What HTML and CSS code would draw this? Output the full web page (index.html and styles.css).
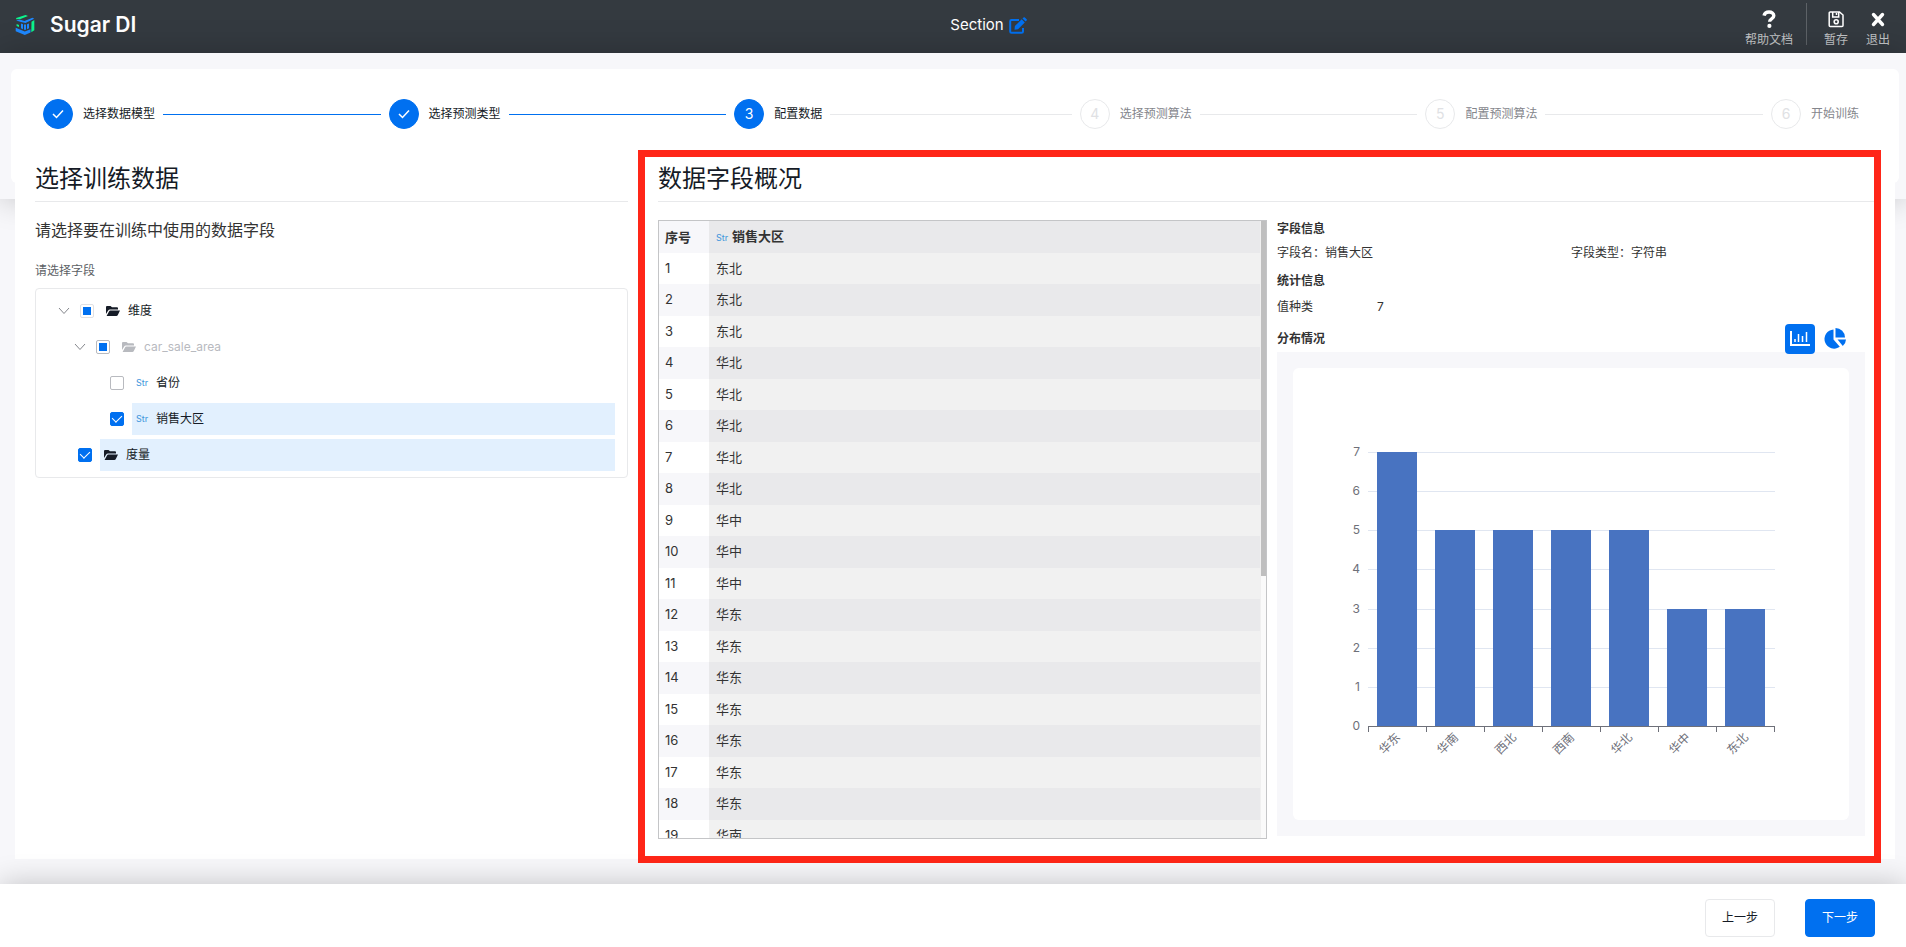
FILE: index.html
```
<!DOCTYPE html>
<html lang="zh-CN">
<head>
<meta charset="utf-8">
<title>Sugar DI</title>
<link rel="stylesheet" href="styles.css">
</head>
<body>
<header class="topbar">
  <div class="brand">
    <svg class="brand-logo" viewBox="0 0 20 20" aria-hidden="true">
      <path d="M1.200 4.200V3L10.500 0l2.500 1L5.500 4z" fill="#0cf58c"/>
      <path d="M16.500 6.800 19.300 5v10.300L16.300 17.200z" fill="#0cf58c"/>
      <path d="M1.600 9 4 10v2L1.600 11z" fill="#0cf58c"/>
      <path d="M1.200 5.500 4.500 4.500 9.500 6 17.500 2.800 19.200 3.800 10.500 8 6 7z" fill="#1e88ff"/>
      <path d="M6 8.500l2 .8v5L6 13.300zM9 9.500h2v5.300H9zM12 9.300l2-.8v4.800l-2 1z" fill="#1e88ff"/>
      <path d="M.7 12.700 9.800 16.600 15.500 14.200v3.200L9.800 20 .7 16.300z" fill="#1e88ff"/>
    </svg>
    <span class="brand-name">Sugar DI</span>
  </div>
  <div class="doc-title">
    <span>Section</span>
    <button class="icon-button" type="button" aria-label="编辑名称">
      <svg class="edit-icon" viewBox="0 0 18 17" aria-hidden="true">
        <path d="M10 3H2.500A1.300 1.300 0 0 0 1.200 4.300v10.200a1.300 1.300 0 0 0 1.300 1.300h10.200a1.300 1.300 0 0 0 1.300-1.300V11" fill="none" stroke="#0070f0" stroke-width="2"/>
        <path d="M5.500 12.700l.4-3.600 6.800-6.800 3.100 3.100L9 12.200zM13.500 1.500 14.500.5a1 1 0 0 1 1.400 0l1.700 1.700a1 1 0 0 1 0 1.400l-1 1z" fill="#0070f0"/>
      </svg>
    </button>
  </div>
  <nav class="tools">
    <button class="tool" type="button">
      <svg class="tool-icon" viewBox="0 0 18 18" aria-hidden="true"><path d="M4 5.600C4.600 3.300 6.500 2 9 2c2.800 0 4.800 1.500 4.800 3.700 0 3.300-4.200 3.100-4.200 6" fill="none" stroke="#fff" stroke-width="3.400"/><circle cx="9.400" cy="15.900" r="2.100" fill="#fff"/></svg>
      <span>帮助文档</span>
    </button>
    <span class="divider"></span>
    <button class="tool" type="button">
      <svg class="tool-icon" viewBox="0 0 18 18" aria-hidden="true"><path d="M3.200 2h9.300L16 5v10.500a1 1 0 0 1-1 1H3.200a1 1 0 0 1-1-1V3a1 1 0 0 1 1-1zM5.700 2v5h6V2M9.500 3v2" fill="none" stroke="#fff" stroke-width="1.500"/><circle cx="9.200" cy="11.800" r="2" fill="none" stroke="#fff" stroke-width="1.600"/></svg>
      <span>暂存</span>
    </button>
    <button class="tool" type="button">
      <svg class="tool-icon" viewBox="0 0 18 18" aria-hidden="true"><path d="M4.500 4.500l9 10m0-10-9 10" fill="none" stroke="#fff" stroke-width="3.400" stroke-linecap="round"/></svg>
      <span>退出</span>
    </button>
  </nav>
</header>

<main class="main">
  <section class="steps-bar">
    <ol class="steps">
      <li class="step done"><span class="dot"><svg viewBox="0 0 12 10" aria-hidden="true"><path d="M1 5l3.500 3.500L11 1.500"/></svg></span><span>选择数据模型</span></li>
      <li class="step done"><span class="dot"><svg viewBox="0 0 12 10" aria-hidden="true"><path d="M1 5l3.500 3.500L11 1.500"/></svg></span><span>选择预测类型</span></li>
      <li class="step active"><span class="dot">3</span><span>配置数据</span></li>
      <li class="step"><span class="dot">4</span><span>选择预测算法</span></li>
      <li class="step"><span class="dot">5</span><span>配置预测算法</span></li>
      <li class="step"><span class="dot">6</span><span>开始训练</span></li>
    </ol>
  </section>

  <div class="panel">
    <section class="fields">
      <h2 class="title">选择训练数据</h2>
      <p class="subtitle">请选择要在训练中使用的数据字段</p>
      <p class="hint">请选择字段</p>
      <div class="tree">
        <div class="node level-1">
          <svg class="chevron" viewBox="0 0 12 12" aria-hidden="true"><path d="M1 3l5 5.500L11 3"/></svg>
          <input class="check partial light" type="checkbox" id="f1">
          <label class="node-label" for="f1"><svg class="folder" viewBox="0 0 14 10" aria-hidden="true"><path d="M0 8V1a1 1 0 0 1 1-1h3.500L6 1.300h5a1 1 0 0 1 1 1V3.500H4a2 2 0 0 0-1.800 1zM.6 10l2.400-4.600a1.500 1.500 0 0 1 1.300-.8H14L11.700 9.200a1.500 1.500 0 0 1-1.300.8z"/></svg>维度</label>
        </div>
        <div class="node level-2 muted">
          <svg class="chevron" viewBox="0 0 12 12" aria-hidden="true"><path d="M1 3l5 5.500L11 3"/></svg>
          <input class="check partial" type="checkbox" id="f2">
          <label class="node-label" for="f2"><svg class="folder" viewBox="0 0 14 10" aria-hidden="true"><path d="M0 8V1a1 1 0 0 1 1-1h3.500L6 1.300h5a1 1 0 0 1 1 1V3.500H4a2 2 0 0 0-1.800 1zM.6 10l2.400-4.600a1.500 1.500 0 0 1 1.300-.8H14L11.700 9.200a1.500 1.500 0 0 1-1.300.8z"/></svg>car_sale_area</label>
        </div>
        <div class="node level-3">
          <input class="check" type="checkbox" id="f3">
          <label class="node-label leaf" for="f3"><span class="type">Str</span>省份</label>
        </div>
        <div class="node level-3">
          <input class="check" type="checkbox" id="f4" checked>
          <label class="node-label leaf selected" for="f4"><span class="type">Str</span>销售大区</label>
        </div>
        <div class="node level-2b">
          <input class="check" type="checkbox" id="f5" checked>
          <label class="node-label leaf selected" for="f5"><svg class="folder" viewBox="0 0 14 10" aria-hidden="true"><path d="M0 8V1a1 1 0 0 1 1-1h3.500L6 1.300h5a1 1 0 0 1 1 1V3.500H4a2 2 0 0 0-1.800 1zM.6 10l2.400-4.600a1.500 1.500 0 0 1 1.300-.8H14L11.700 9.200a1.500 1.500 0 0 1-1.300.8z"/></svg>度量</label>
        </div>
      </div>
    </section>

    <section class="overview">
      <h2 class="title">数据字段概况</h2>
      <div class="overview-body">
        <div class="grid-box">
          <div class="grid-view">
            <table class="grid">
              <thead><tr><th class="index">序号</th><th><span class="type">Str</span>销售大区</th></tr></thead>
              <tbody>
                <tr><td>1</td><td>东北</td></tr>
                <tr><td>2</td><td>东北</td></tr>
                <tr><td>3</td><td>东北</td></tr>
                <tr><td>4</td><td>华北</td></tr>
                <tr><td>5</td><td>华北</td></tr>
                <tr><td>6</td><td>华北</td></tr>
                <tr><td>7</td><td>华北</td></tr>
                <tr><td>8</td><td>华北</td></tr>
                <tr><td>9</td><td>华中</td></tr>
                <tr><td>10</td><td>华中</td></tr>
                <tr><td>11</td><td>华中</td></tr>
                <tr><td>12</td><td>华东</td></tr>
                <tr><td>13</td><td>华东</td></tr>
                <tr><td>14</td><td>华东</td></tr>
                <tr><td>15</td><td>华东</td></tr>
                <tr><td>16</td><td>华东</td></tr>
                <tr><td>17</td><td>华东</td></tr>
                <tr><td>18</td><td>华东</td></tr>
                <tr><td>19</td><td>华南</td></tr>
              </tbody>
            </table>
          </div>
          <div class="track"><div class="thumb"></div></div>
        </div>

        <div class="info">
          <h3 class="info-title">字段信息</h3>
          <div class="info-pair"><span>字段名：销售大区</span><span>字段类型：字符串</span></div>
          <h3 class="info-title">统计信息</h3>
          <div class="info-stat"><span>值种类</span><span>7</span></div>
          <div class="info-head">
            <h3 class="info-title">分布情况</h3>
            <div class="switch">
              <button class="switch-button on" type="button" aria-label="柱状图"><svg viewBox="0 0 20 16" aria-hidden="true"><path d="M1 0v14h19" stroke-width="2"/><path d="M5 11V8M8.500 11V3M12.500 11V5M16.500 11V1" stroke-width="1.500"/></svg></button>
              <button class="switch-button" type="button" aria-label="饼图"><svg viewBox="0 0 22 22" aria-hidden="true"><path d="M9.500 1.500V11.500l6.300 7.300a9.600 9.600 0 1 1-6.300-17.300z"/><path d="M11.500 0a9.500 9.500 0 0 1 9.500 9.500h-9.500z"/><path d="M13.500 11.500H22a9 9 0 0 1-3.200 6.500z"/></svg></button>
            </div>
          </div>
          <div class="chart-frame">
            <div class="chart-card">
              <svg class="chart" viewBox="0 0 556 452" role="img" aria-label="分布情况柱状图">
                <g class="gridlines"><path d="M75 84.500H482M75 123.500H482M75 162.500H482M75 201.500H482M75 241.500H482M75 280.500H482M75 319.500H482"/></g>
                <g class="bars">
                  <rect x="84" y="84" width="40" height="274"/>
                  <rect x="142" y="162" width="40" height="196"/>
                  <rect x="200" y="162" width="40" height="196"/>
                  <rect x="258" y="162" width="40" height="196"/>
                  <rect x="316" y="162" width="40" height="196"/>
                  <rect x="374" y="241" width="40" height="117"/>
                  <rect x="432" y="241" width="40" height="117"/>
                </g>
                <path class="axis" d="M75 358.500H482M75.500 359v5M133.500 359v5M191.500 359v5M249.500 359v5M307.500 359v5M365.500 359v5M423.500 359v5M481.500 359v5"/>
                <g class="labels">
                  <text x="67" y="88">7</text><text x="67" y="127">6</text><text x="67" y="166">5</text><text x="67" y="205">4</text>
                  <text x="67" y="245">3</text><text x="67" y="284">2</text><text x="67" y="323">1</text><text x="67" y="362">0</text>
                  <text transform="translate(108 370) rotate(-45)">华东</text>
                  <text transform="translate(166 370) rotate(-45)">华南</text>
                  <text transform="translate(224 370) rotate(-45)">西北</text>
                  <text transform="translate(282 370) rotate(-45)">西南</text>
                  <text transform="translate(340 370) rotate(-45)">华北</text>
                  <text transform="translate(398 370) rotate(-45)">华中</text>
                  <text transform="translate(456 370) rotate(-45)">东北</text>
                </g>
              </svg>
            </div>
          </div>
        </div>
      </div>
      <div class="highlight"></div>
    </section>
  </div>
</main>

<footer class="footer">
  <button class="btn" type="button">上一步</button>
  <button class="btn primary" type="button">下一步</button>
</footer>
</body>
</html>
```
FILE: styles.css
```
* { box-sizing: border-box; }
body {
  margin: 0;
  min-height: 100vh;
  height: 100vh;
  display: flex;
  flex-direction: column;
  background: #f7f7fa;
  color: #151b26;
  font: 12px/16px Inter, "Noto Sans CJK SC", sans-serif;
  overflow: hidden;
}
h2, h3, p, ol { margin: 0; padding: 0; font-weight: 400; }
button { font: inherit; border: 0; padding: 0; background: none; color: inherit; cursor: pointer; }
svg { display: block; }

/* top bar */
.topbar {
  flex: none;
  height: 53px;
  display: grid;
  grid-template-columns: 13fr auto 12fr;
  background: #343a40;
  color: #fff;
  padding: 0 16px 0 15px;
}
.brand { display: flex; align-items: center; gap: 15px; height: 49px; }
.brand-logo { width: 20px; height: 20px; }
.brand-name { font-size: 21px; line-height: 24px; font-weight: 600; }
.doc-title { display: flex; align-items: center; gap: 5px; height: 50px; font-size: 15px; }
.edit-icon { width: 18px; height: 17px; }
.tools { display: flex; justify-content: flex-end; align-items: flex-start; gap: 18px; }
.tool { display: flex; flex-direction: column; align-items: center; gap: 4px; padding-top: 10px; color: #c2c4c6; }
.tool-icon { width: 18px; height: 18px; }
.divider { width: 1px; height: 42px; margin: 3px -1px 0 -5px; background: #5d6267; }

/* steps */
.main { flex: 1; min-height: 0; display: flex; flex-direction: column; }
.steps-bar {
  flex: none;
  padding: 16px 7px 16px 11px;
  background: #f7f7fa;
  box-shadow: 0 0 30px rgba(0, 0, 0, .22);
}
.steps {
  display: flex;
  align-items: flex-start;
  gap: 8px;
  min-height: 114px;
  padding: 30px 40px 0 32px;
  background: #fff;
  border-radius: 6px;
  list-style: none;
}
.step { flex: 1; display: flex; align-items: center; gap: 10px; color: #84868c; }
.step:last-child { flex: none; }
.step:not(:last-child)::after { content: ""; flex: 1; height: 1px; margin-left: -2px; background: #e8e9eb; }
.dot {
  width: 30px;
  height: 30px;
  display: flex;
  align-items: center;
  justify-content: center;
  border: 1px solid #e8e9eb;
  border-radius: 50%;
  color: #e0e1e4;
  font-size: 14px;
}
.dot svg { width: 12px; height: 10px; fill: none; stroke: #fff; stroke-width: 1.500; }
.step.done, .step.active { color: #151b26; }
.step.done .dot, .step.active .dot { background: #0070f0; border-color: #0070f0; color: #fff; }
.step.done::after { background: #0070f0 !important; }

/* content panel */
.panel {
  flex: 1;
  min-height: 0;
  position: relative;
  display: grid;
  grid-template-columns: 593fr 1217fr;
  grid-template-rows: minmax(0, 1fr);
  gap: 30px;
  margin: -42px 11px 25px 15px;
  padding: 0 20px 20px;
  background: #fff;
}
.title { flex: none; font-size: 24px; line-height: 44px; border-bottom: 1px solid #e8e9eb; }
.subtitle { margin-top: 16px; font-size: 16px; line-height: 24px; color: #333; }
.hint { margin: 20px 0 9px; color: #5c5f66; line-height: 17px; }

/* field tree */
.tree {
  display: flex;
  flex-direction: column;
  gap: 4px;
  padding: 6px 12px 6px 22px;
  border: 1px solid #e8e9eb;
  border-radius: 4px;
}
.node { display: flex; align-items: center; height: 32px; }
.level-2 { padding-left: 16px; }
.level-3 { padding-left: 52px; }
.level-2b { padding-left: 20px; }
.chevron { width: 12px; height: 12px; margin-right: 10px; fill: none; stroke: #84868c; stroke-width: 1; }
.check {
  appearance: none;
  flex: none;
  display: grid;
  place-items: center;
  width: 14px;
  height: 14px;
  margin: 0;
  border: 1px solid #b8babf;
  border-radius: 2px;
  background: #fff;
}
.check.light { border-color: #e0e1e4; }
.check.partial::after { content: ""; width: 8px; height: 8px; background: #0070f0; }
.check:checked { background: #0070f0; border-color: #0070f0; }
.check:checked::after {
  content: "";
  width: 5px;
  height: 8px;
  margin-bottom: 4px;
  border: solid #fff;
  border-width: 0 1px 1px 0;
  transform: rotate(45deg);
}
.node-label { flex: 1; display: flex; align-items: center; gap: 8px; height: 32px; margin-left: 8px; padding-left: 4px; }
.selected { background: #e2f0fe; }
.muted .node-label { color: #b8babf; }
.folder { width: 14px; height: 10px; fill: currentColor; }
.type { color: #3d95dc; font-size: 9px; font-weight: 400; }

/* overview */
.overview { position: relative; display: flex; flex-direction: column; min-width: 0; }
.overview-body {
  flex: 1;
  min-height: 0;
  display: grid;
  grid-template-columns: 609fr 588fr;
  grid-template-rows: minmax(0, 1fr);
  gap: 10px;
  padding: 18px 10px 0 0;
}
.highlight { position: absolute; inset: -7px -6px -24px -20px; border: 7px solid #ff2618; pointer-events: none; }

.grid-box { display: flex; min-width: 0; border: 1px solid #c4c5c7; }
.grid-view { flex: 1; overflow: hidden; }
.grid { width: 100%; border-collapse: collapse; font-size: 13px; line-height: 18px; color: #333; }
.grid th, .grid td { height: 32px; padding: 0 7px; text-align: left; background: #e9e9eb; }
.grid td { padding-bottom: 2px; }
.grid th:first-child, .grid td:first-child { width: 50px; padding-left: 6px; background: #f7f7fa; }
.grid th .type { margin-right: 4px; }
.grid th { font-weight: 600; }
.grid tbody tr:nth-child(odd) td { height: 31px; background: #f1f1f1; }
.grid tbody tr:nth-child(odd) td:first-child { background: #fff; }
.track { width: 6px; background: #fafafa; border-left: 1px solid #f0f0f0; }
.thumb { height: 57.5%; background: #bfbfbf; }

/* field info */
.info { display: flex; flex-direction: column; min-width: 0; color: #333; padding: 1px 0 3px; }
.info-title { font-size: 12px; font-weight: 600; }
.info-pair { display: grid; grid-template-columns: 1fr 1fr; margin: 8px 0 12px; }
.info-stat { display: grid; grid-template-columns: 100px 1fr; margin: 10px 0 9px; }
.info-head { display: flex; align-items: center; justify-content: space-between; position: relative; }
.switch { display: flex; gap: 5px; padding-right: 15px; }
.switch-button { display: grid; place-items: center; width: 30px; height: 30px; border-radius: 4px; }
.switch-button svg { width: 22px; height: 22px; fill: #0070f0; }
.switch-button.on { background: #0070f0; }
.switch-button.on svg { width: 20px; height: 16px; fill: none; stroke: #fff; }
.chart-frame { flex: 1; min-height: 0; display: flex; margin-top: -2px; padding: 16px; background: #f7f7fa; }
.chart-card { flex: 1; min-width: 0; background: #fff; border-radius: 6px; }
.chart { width: 100%; height: 100%; }
.gridlines { stroke: #e0e6f1; fill: none; }
.bars { fill: #4873c1; }
.axis { stroke: #6e7079; fill: none; }
.labels { fill: #6e7079; font-size: 12px; text-anchor: end; }

/* footer */
.footer {
  flex: none;
  position: relative;
  display: flex;
  justify-content: flex-end;
  align-items: center;
  gap: 30px;
  height: 63px;
  padding: 5px 31px 0;
  background: #fff;
  box-shadow: 0 0 30px rgba(0, 0, 0, .22);
}
.btn { width: 70px; height: 38px; border: 1px solid #e8e9eb; border-radius: 4px; background: #fff; }
.btn.primary { background: #0070f0; border-color: #0070f0; color: #fff; }
```
